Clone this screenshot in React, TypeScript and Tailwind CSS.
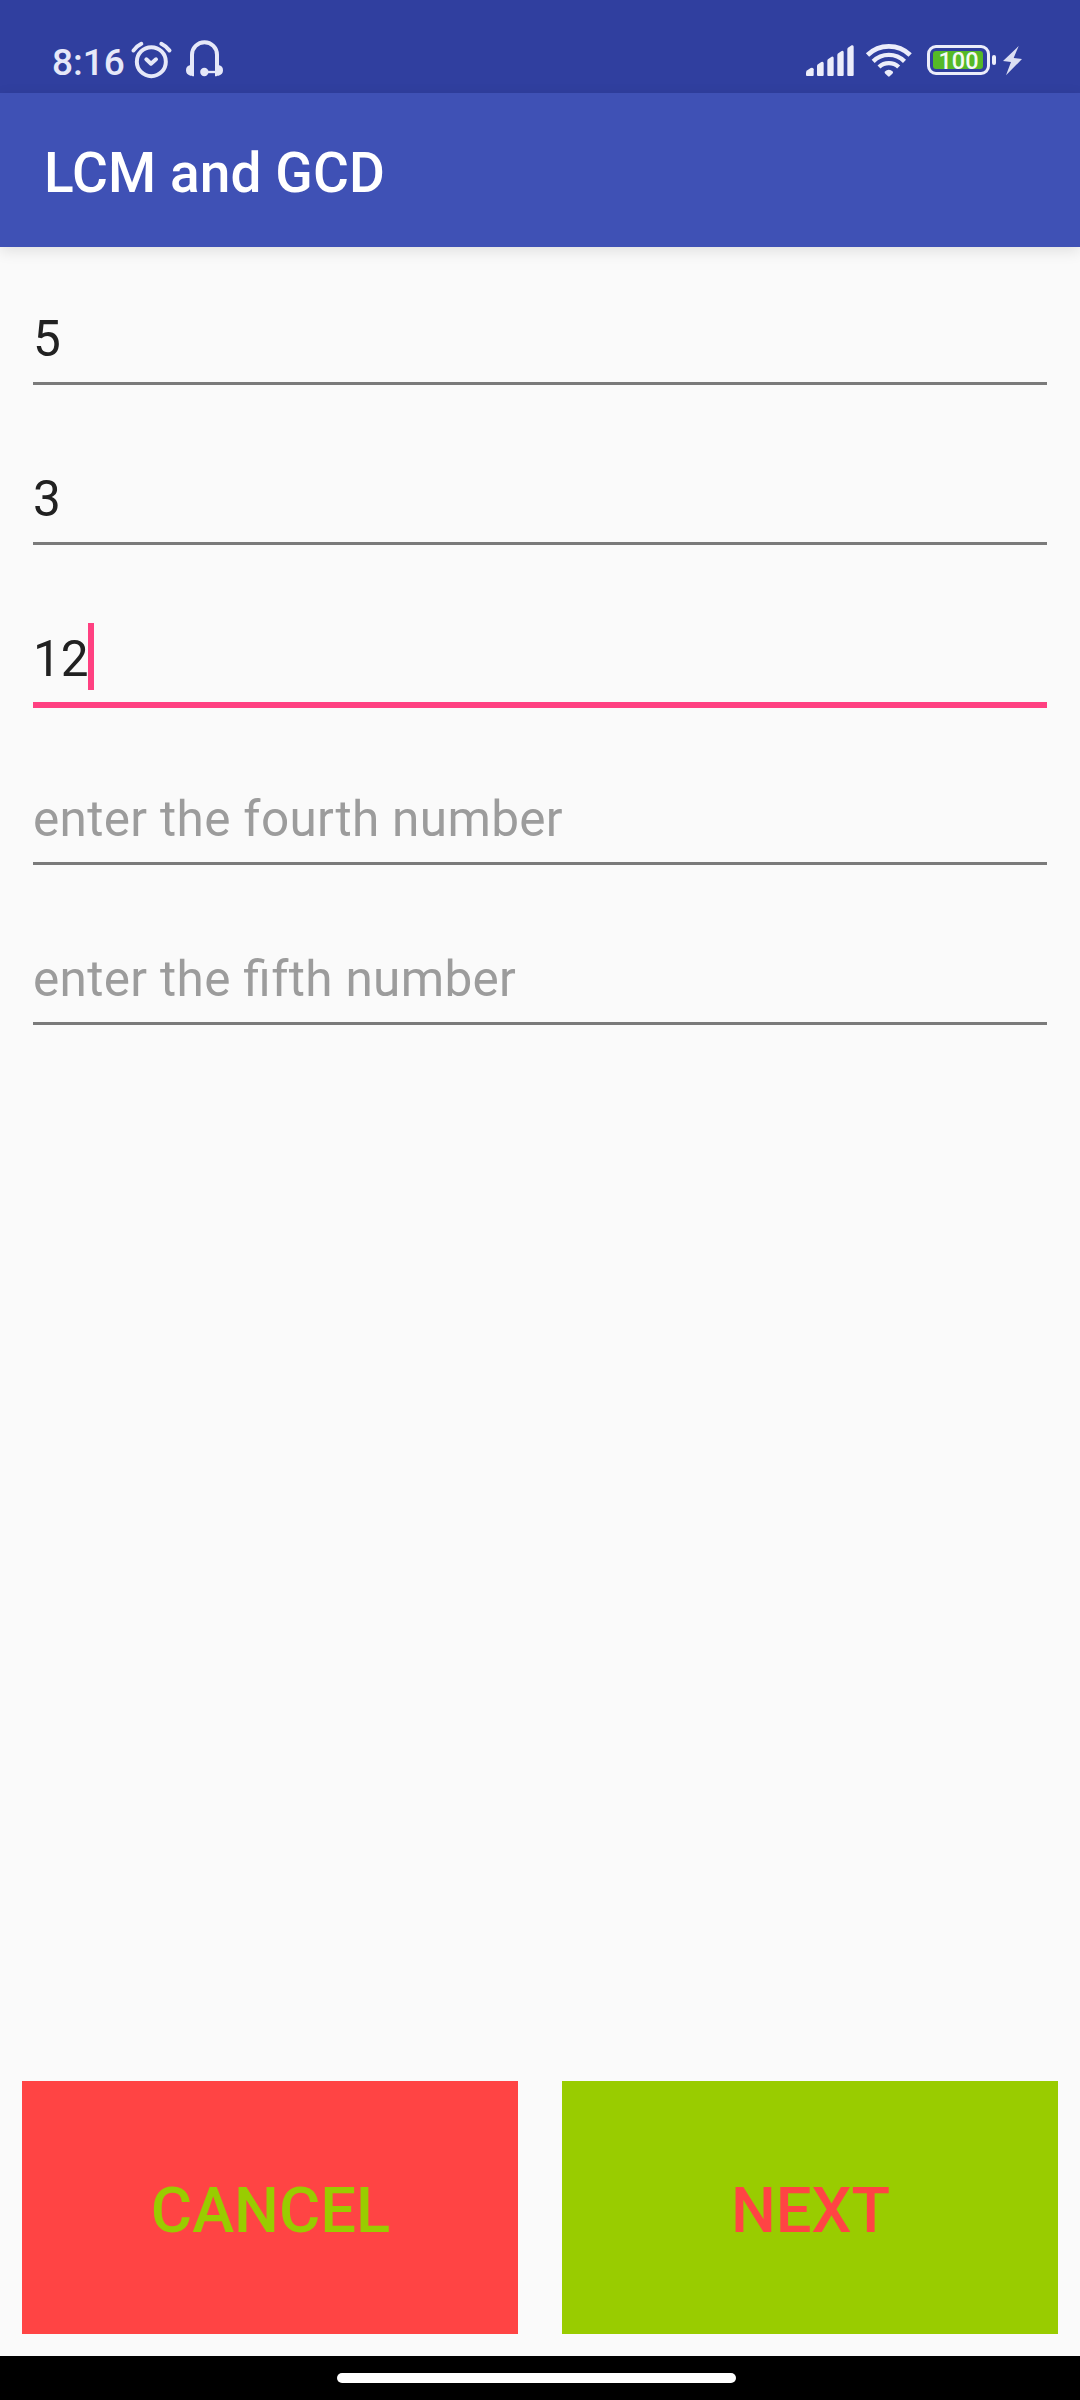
import React from "react";

const AlarmIcon = () => (
  <svg viewBox="300 54 129 126" className="h-[42px] w-[43px]" fill="none" stroke="#e6e8f8" strokeLinecap="round" strokeLinejoin="round">
    <circle cx="364" cy="125" r="43.5" strokeWidth="12" />
    <path d="M349 118l14 13 15-13" strokeWidth="12" />
    <path d="M310.500 91.500Q319 79 334 71.500M394 71.500Q409 79 418.500 91.500" strokeWidth="12" />
  </svg>
);

const HeadsetIcon = () => (
  <svg viewBox="462 54 123 126" className="h-[42px] w-[41px]" fill="none" stroke="#e6e8f8">
    <path d="M486 150V104a37.500 37.500 0 0 1 75 0v46" strokeWidth="12" />
    <path d="M492 135h-11q-13 3-13 16t13 16h5q0 2 6 2zM555 135h11q13 3 13 16t-13 16h-5q0 2-6 2z" fill="#e6e8f8" stroke="none" />
    <circle cx="523" cy="156" r="12.500" fill="#e6e8f8" stroke="none" />
    <path d="M530 156h30" strokeWidth="7" />
  </svg>
);

const SignalIcon = () => (
  <svg viewBox="45 60 144 120" className="h-[40px] w-[48px]" fill="#ecedfa">
    <path d="M49 151l10-7q9-2 9 4v17q0 3-3 3H48q-3 0-3-3v-7q0-4 4-7z" />
    <path d="M82 132l9-6q7-2 7 4v35q0 3-3 3H82q-4 0-4-3v-27q0-4 4-6z" />
    <path d="M113 116l9-6q6-2 6 4v51q0 3-3 3h-13q-3 0-3-3v-43q0-4 4-6z" />
    <path d="M143 99l9-6q6-2 6 4v68q0 3-3 3h-13q-3 0-3-3v-60q0-4 4-6z" />
    <path d="M173 82l9-6q6-2 6 4v85q0 3-3 3h-13q-3 0-3-3V88q0-4 4-6z" />
  </svg>
);

const WifiIcon = () => (
  <svg viewBox="225 60 144 120" className="h-[40px] w-[48px]" fill="none" stroke="#ecedfa">
    <path d="M232.500 105a92 92 0 0 1 128 0" strokeWidth="14" />
    <path d="M249.500 124a67 67 0 0 1 94 0" strokeWidth="13" />
    <path d="M267 141a43 43 0 0 1 59 0" strokeWidth="13" />
    <path d="M284 155q12.500-11 25 0 1 3-2 6l-8 8q-2.500 2-5 0l-8-8q-3-3-2-6z" fill="#ecedfa" stroke="none" />
  </svg>
);

const BatteryTip = () => <span className="ml-[2px] h-[10px] w-[4px] rounded-[2px] bg-[#ecedfa]" />;

const BoltIcon = () => (
  <svg viewBox="636 72 63 99" className="h-[33px] w-[21px]" fill="#dcdff3">
    <path d="M686 78l-47 45 24 3-15 40 48-49-25-3z" />
  </svg>
);

function StatusBar() {
  return (
    <header className="flex h-[93px] items-start bg-[#303f9f] pl-[52px] pr-[57px] pt-[38px]">
      <span className="w-[78px] whitespace-nowrap pt-[3px] text-[37px] font-medium leading-[44px] text-[#e6e8f8]">8:16</span>
      <AlarmIcon />
      <span className="w-[11px]" />
      <HeadsetIcon />
      <div className="ml-auto flex items-start">
        <span className="pt-[2px]"><SignalIcon /></span>
        <span className="ml-[11px] pt-[2px]"><WifiIcon /></span>
        <div className="ml-[14px] mt-[7px] flex items-center">
          <div className="h-[30px] w-[63px] rounded-[9px] border-[3px] border-[#ecedfa] p-[3px]">
            <div className="flex h-[18px] w-[50px] items-center justify-center rounded-[3px] bg-[#55b927] pl-[1px] pt-[3px] text-[23.500px] font-medium leading-none text-[#f4faf5]">100</div>
          </div>
          <BatteryTip />
        </div>
        <span className="ml-[6px] pt-[6px]"><BoltIcon /></span>
      </div>
    </header>
  );
}

type FieldProps = { value?: string; hint?: string; focused?: boolean };

function Field({ value, hint, focused = false }: FieldProps) {
  return (
    <div className={focused ? "-mb-[3px] h-[119px] border-b-[6px] border-[#ff4081]" : "h-[116px] border-b-[3px] border-[#7a7a7a]"}>
      <div className="flex h-[113px] items-start pt-[34px]">
        <span className={value ? "pt-[1px] text-[49.500px] leading-[70px] text-[#212121]" : "pt-[1px] text-[49.500px] leading-[70px] tracking-[0.33px] text-[#9c9c9c] [font-feature-settings:'liga'_1]"}>{value ?? hint}</span>
        {focused && <span className="-ml-[1px] h-[67px] w-[6px] bg-[#ff4081]" />}
      </div>
    </div>
  );
}

export default function App() {
  return (
    <div className="flex h-[2400px] w-[1080px] flex-col overflow-hidden bg-[#fafafa] font-['Roboto',sans-serif]">
      <StatusBar />
      <div className="flex h-[154px] items-center bg-[#3f51b5] pl-[44px] shadow-[0_4px_14px_rgba(0,0,0,0.11)]">
        <h1 className="pt-[6px] text-[55px] font-medium leading-[64px] tracking-[0.1px] text-white">LCM and GCD</h1>
      </div>
      <main className="flex flex-1 flex-col gap-[44px] px-[33px] pt-[22px]">
        <Field value="5" />
        <Field value="3" />
        <Field value="12" focused />
        <Field hint="enter the fourth number" />
        <Field hint="enter the fifth number" />
      </main>
      <div className="flex gap-[44px] px-[22px] pb-[22px]">
        <button className="h-[253px] flex-1 bg-[#ff4444] pl-[1px] pt-[5px] text-[63.250px] font-medium text-[#99cc00]">CANCEL</button>
        <button className="h-[253px] flex-1 bg-[#99cc00] pl-[1px] pt-[5px] text-[63.250px] font-medium text-[#ff4444]">NEXT</button>
      </div>
      <nav className="flex h-[44px] bg-black pl-[337px] pt-[17px]">
        <span className="h-[10px] w-[399px] rounded-full bg-white" />
      </nav>
    </div>
  );
}
